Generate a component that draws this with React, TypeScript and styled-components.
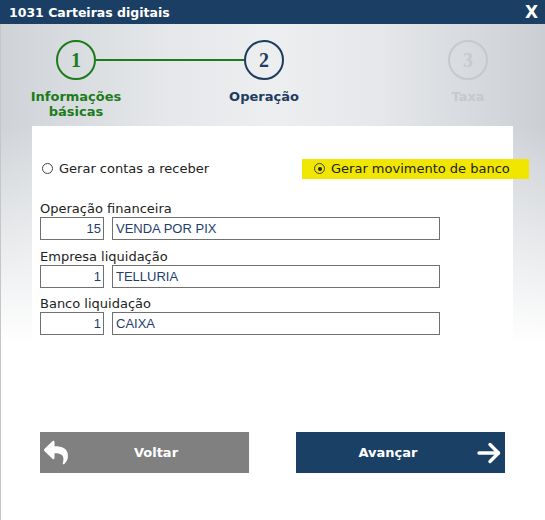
import React from "react";
import styled, { createGlobalStyle } from "styled-components";

const GlobalStyle = createGlobalStyle`
  html, body { margin: 0; padding: 0; }
  body {
    width: 545px;
    height: 520px;
    overflow: hidden;
    background: #ffffff;
    font-family: "DejaVu Sans", Verdana, sans-serif;
  }
`;

const Window = styled.div`
  width: 545px;
  height: 520px;
  display: flex;
  flex-direction: column;
  overflow: hidden;
`;

const TitleBar = styled.div`
  height: 24px;
  flex: none;
  background: #1b3f64;
  color: #ffffff;
  display: flex;
  align-items: center;
  justify-content: space-between;
  padding: 1px 7px 0 9px;
  box-sizing: border-box;
`;

const Title = styled.span`
  font-weight: bold;
  font-size: 12.5px;
`;

const Close = styled.span`
  font-weight: bold;
  font-size: 17px;
  line-height: 1;
`;

const Body = styled.div`
  flex: 1;
  display: flex;
  flex-direction: column;
  border-left: 1px solid #c4c6c8;
  background:
    linear-gradient(to bottom, rgba(255, 255, 255, 0) 0px, rgba(255, 255, 255, 0) 100px, #ffffff 320px),
    linear-gradient(to right, #cfd3d7 0%, #e5e7ea 30%, #eceef0 50%, #e5e7ea 70%, #cbcfd4 100%);
`;

const Steps = styled.div`
  display: flex;
  align-items: flex-start;
  padding: 16px 0 0 55px;
`;

type Tone = "done" | "current" | "todo";

const toneColor = (t: Tone) =>
  t === "done" ? "#1c7c1c" : t === "current" ? "#1d3c5e" : "#c6c9cc";

const Step = styled.div<{ $offset?: number }>`
  width: 40px;
  display: flex;
  flex-direction: column;
  align-items: center;
  margin-left: ${(p) => p.$offset ?? 0}px;
`;

const Circle = styled.div<{ $tone: Tone }>`
  width: 40px;
  height: 40px;
  box-sizing: border-box;
  border-radius: 50%;
  border: 2px solid ${(p) => toneColor(p.$tone)};
  color: ${(p) => toneColor(p.$tone)};
  display: flex;
  align-items: center;
  justify-content: center;
  font-family: "Liberation Serif", "Times New Roman", serif;
  font-weight: bold;
  font-size: 20px;
`;

const StepLabel = styled.div<{ $tone: Tone }>`
  margin-top: 9px;
  white-space: nowrap;
  text-align: center;
  font-weight: bold;
  font-size: 13px;
  line-height: 15px;
  color: ${(p) => toneColor(p.$tone)};
`;

const Connector = styled.div`
  width: 148px;
  height: 2px;
  margin-top: 19px;
  background: #1c7c1c;
`;

const Panel = styled.div`
  flex: 1;
  margin: 7px 32px 0 31px;
  background: #ffffff;
  padding: 32px 0 0 8px;
  display: flex;
  flex-direction: column;
`;

const RadioRow = styled.div`
  height: 21px;
  display: flex;
  align-items: center;
  font-size: 13px;
  color: #222;
`;

const RadioOption = styled.div<{ $highlight?: boolean; $width: number }>`
  flex: none;
  width: ${(p) => p.$width}px;
  height: 20px;
  box-sizing: border-box;
  display: flex;
  align-items: center;
  gap: 6px;
  padding-left: ${(p) => (p.$highlight ? 12 : 2)}px;
  background: ${(p) => (p.$highlight ? "#f1e600" : "transparent")};
`;

const RadioDot = styled.span<{ $checked?: boolean }>`
  width: 11px;
  height: 11px;
  box-sizing: border-box;
  border-radius: 50%;
  border: 1.6px solid #444;
  display: flex;
  align-items: center;
  justify-content: center;
  &::after {
    content: "";
    width: 4px;
    height: 4px;
    border-radius: 50%;
    background: ${(p) => (p.$checked ? "#222" : "transparent")};
  }
`;

const Fields = styled.div`
  margin-top: 22px;
  display: flex;
  flex-direction: column;
  gap: 8.5px;
`;

const Field = styled.div`
  display: flex;
  flex-direction: column;
`;

const FieldLabel = styled.div`
  font-size: 13px;
  line-height: 16px;
  color: #222;
`;

const InputRow = styled.div`
  display: flex;
  gap: 8px;
`;

const Box = styled.input<{ $w: number; $right?: boolean }>`
  width: ${(p) => p.$w}px;
  height: 23px;
  box-sizing: border-box;
  margin: 0;
  border: 1px solid #707070;
  border-radius: 0;
  background: #ffffff;
  padding: 0 ${(p) => (p.$right ? 2 : 3)}px;
  font-family: "Liberation Sans", Arial, sans-serif;
  font-size: 13px;
  color: #1f3e6c;
  text-align: ${(p) => (p.$right ? "right" : "left")};
  outline: none;
`;

const Buttons = styled.div`
  margin-top: 97px;
  display: flex;
  gap: 47px;
`;

const Button = styled.button<{ $variant: "back" | "next" }>`
  width: 209px;
  height: 41px;
  border: none;
  margin: 0;
  padding: 0;
  display: flex;
  align-items: center;
  background: ${(p) => (p.$variant === "back" ? "#808080" : "#1a4066")};
  color: #ffffff;
  font-family: "DejaVu Sans", Verdana, sans-serif;
  font-weight: bold;
  font-size: 13px;
  cursor: pointer;
`;

const IconSlot = styled.span<{ $w: number }>`
  flex: none;
  width: ${(p) => p.$w}px;
  display: flex;
  align-items: center;
  justify-content: center;
`;

const ButtonText = styled.span`
  flex: 1;
  text-align: center;
`;

const ReplyIcon = () => (
  <svg width="24" height="27" viewBox="0 0 512 512" preserveAspectRatio="none" fill="#fff">
    <path d="M8.309 189.836L184.313 37.851C199.719 24.546 224 35.347 224 56.015v80.053c160.629 1.839 288 34.032 288 186.258 0 61.441-39.581 122.309-83.333 154.132-13.653 9.931-33.111-2.533-28.077-18.631 45.344-145.012-21.507-183.51-176.59-185.742V360c0 20.7-24.3 31.453-39.687 18.164l-176.004-152c-11.071-9.562-11.086-26.753 0-36.328z" />
  </svg>
);

const ArrowRight = () => (
  <svg width="24" height="22" viewBox="0 0 24 22" fill="none" stroke="#fff" strokeWidth="3.4" strokeLinecap="round" strokeLinejoin="round">
    <line x1="2" y1="11" x2="21.5" y2="11" />
    <polyline points="13,2.5 21.5,11 13,19.5" />
  </svg>
);

const fields = [
  { label: "Operação financeira", code: "15", name: "VENDA POR PIX" },
  { label: "Empresa liquidação", code: "1", name: "TELLURIA" },
  { label: "Banco liquidação", code: "1", name: "CAIXA" },
];

export default function App() {
  return (
    <>
      <GlobalStyle />
      <Window>
        <TitleBar>
          <Title>1031 Carteiras digitais</Title>
          <Close>X</Close>
        </TitleBar>
        <Body>
          <Steps>
            <Step>
              <Circle $tone="done">1</Circle>
              <StepLabel $tone="done">
                Informações
                <br />
                básicas
              </StepLabel>
            </Step>
            <Connector />
            <Step>
              <Circle $tone="current">2</Circle>
              <StepLabel $tone="current">Operação</StepLabel>
            </Step>
            <Step $offset={164}>
              <Circle $tone="todo">3</Circle>
              <StepLabel $tone="todo">Taxa</StepLabel>
            </Step>
          </Steps>
          <Panel>
            <RadioRow>
              <RadioOption $width={262}>
                <RadioDot />
                Gerar contas a receber
              </RadioOption>
              <RadioOption $width={227} $highlight>
                <RadioDot $checked />
                Gerar movimento de banco
              </RadioOption>
            </RadioRow>
            <Fields>
              {fields.map((f) => (
                <Field key={f.label}>
                  <FieldLabel>{f.label}</FieldLabel>
                  <InputRow>
                    <Box $w={64} $right readOnly value={f.code} />
                    <Box $w={328} readOnly value={f.name} />
                  </InputRow>
                </Field>
              ))}
            </Fields>
            <Buttons>
              <Button $variant="back">
                <IconSlot $w={32}>
                  <ReplyIcon />
                </IconSlot>
                <ButtonText>Voltar</ButtonText>
                <IconSlot $w={9} />
              </Button>
              <Button $variant="next">
                <IconSlot $w={7} />
                <ButtonText>Avançar</ButtonText>
                <IconSlot $w={32}>
                  <ArrowRight />
                </IconSlot>
              </Button>
            </Buttons>
          </Panel>
        </Body>
      </Window>
    </>
  );
}
